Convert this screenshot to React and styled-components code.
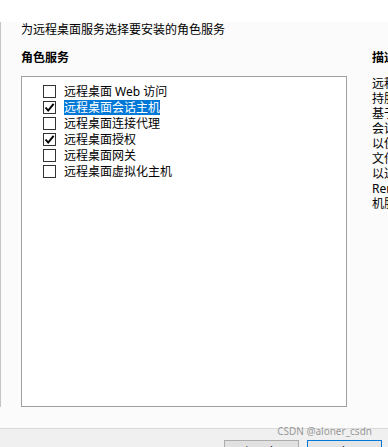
import React from "react";
import styled, { createGlobalStyle } from "styled-components";

const Global = createGlobalStyle`
  html, body { margin: 0; padding: 0; background: #fbfbfb; overflow: hidden; }
  body { font-family: "Segoe UI", "Noto Sans", "Noto Sans CJK SC", sans-serif; font-size: 12px; color: #000; }
`;

const Page = styled.div`
  position: relative;
  width: 388px;
  height: 447px;
  overflow: hidden;
  display: flex;
  flex-direction: column;
  background: #fbfbfb;
`;

const TopStrip = styled.div`
  height: 22px;
  background: #ffffff;
  flex: none;
`;

const Main = styled.div`
  flex: none;
  height: 385px;
  border-left: 1px solid #c4c4c4;
  padding-left: 20px;
  box-sizing: border-box;
  display: flex;
  flex-direction: column;
`;

const Title = styled.div`
  line-height: 16px;
  height: 16px;
  white-space: nowrap;
`;

const Columns = styled.div`
  margin-top: 12px;
  display: flex;
  gap: 25px;
  flex: 1;
  min-height: 0;
`;

const LeftCol = styled.div`
  width: 326px;
  flex: none;
  display: flex;
  flex-direction: column;
`;

const RightCol = styled.div`
  flex: none;
  width: 200px;
  display: flex;
  flex-direction: column;
`;

const Heading = styled.div`
  font-weight: bold;
  line-height: 16px;
  height: 16px;
  white-space: nowrap;
`;

const ListBox = styled.div`
  margin-top: 10px;
  flex: 1;
  background: #ffffff;
  border: 1px solid #a0a0a0;
  padding: 6px 0 0 21px;
  display: flex;
  flex-direction: column;
`;

const Row = styled.div`
  height: 16px;
  display: flex;
  align-items: center;
  gap: 8px;
`;

const Box = styled.span`
  width: 11px;
  height: 11px;
  border: 1px solid #333333;
  background: #ffffff;
  flex: none;
  display: flex;
  align-items: center;
  justify-content: center;
`;

const Label = styled.span`
  line-height: 15px;
  height: 15px;
  white-space: nowrap;
  background: ${(p) => (p.$selected ? "#0078d7" : "transparent")};
  color: ${(p) => (p.$selected ? "#ffffff" : "#000000")};
`;

const Desc = styled.div`
  margin-top: 10px;
  display: flex;
  flex-direction: column;
`;

const DescLine = styled.div`
  line-height: 15px;
  height: 15px;
  white-space: nowrap;
`;

const Spacer = styled.div`
  height: 21px;
  flex: none;
`;

const Footer = styled.div`
  flex: 1;
  border-top: 1px solid #dadada;
  background: #f0f0f0;
  display: flex;
  justify-content: flex-end;
  align-items: flex-start;
  gap: 8px;
  padding: 11px 6px 0 0;
`;

const Button = styled.button`
  width: 75px;
  height: 23px;
  box-sizing: border-box;
  font-family: inherit;
  font-size: 12px;
  padding: 3px 0 0;
  line-height: 16px;
  color: #000;
  background: ${(p) => (p.$primary ? "#e5e5e5" : "#e1e1e1")};
  border: 1px solid ${(p) => (p.$primary ? "#0078d7" : "#adadad")};
  flex: none;
`;

const Watermark = styled.div`
  position: absolute;
  right: 16px;
  top: 425px;
  font-family: "Noto Sans", "Liberation Sans", sans-serif;
  font-size: 10px;
  line-height: 13px;
  color: rgba(120, 120, 120, 0.75);
  white-space: nowrap;
`;

const Check = () => (
  <svg width="11" height="11" viewBox="0 0 11 11">
    <path d="M1.5 5.5 L4.2 8.6 L9.6 1.8" fill="none" stroke="#000" strokeWidth="1.9" />
  </svg>
);

const items = [
  { label: "远程桌面 Web 访问", checked: false },
  { label: "远程桌面会话主机", checked: true, selected: true },
  { label: "远程桌面连接代理", checked: false },
  { label: "远程桌面授权", checked: true },
  { label: "远程桌面网关", checked: false },
  { label: "远程桌面虚拟化主机", checked: false },
];

const descLines = [
  "远程桌面会话主机(RD 会话主机)",
  "持服务器托管基于 Windows 的程序",
  "基于 Windows 的桌面。用户可以连接",
  "会话主机服务器来运行程序、保存",
  "以使用该服务器上的网络资源。",
  "文件以及使用网络资源。用户可",
  "以通过使用远程桌面连接客户端或",
  "RemoteApp 程序来访问 RD 会话主",
  "机服务器。",
];

export default function App() {
  return (
    <>
      <Global />
      <Page>
        <TopStrip />
        <Main>
          <Title>为远程桌面服务选择要安装的角色服务</Title>
          <Columns>
            <LeftCol>
              <Heading>角色服务</Heading>
              <ListBox>
                {items.map((it) => (
                  <Row key={it.label}>
                    <Box>{it.checked && <Check />}</Box>
                    <Label $selected={it.selected}>{it.label}</Label>
                  </Row>
                ))}
              </ListBox>
            </LeftCol>
            <RightCol>
              <Heading>描述</Heading>
              <Desc>
                {descLines.map((l, i) => (
                  <DescLine key={i}>{l}</DescLine>
                ))}
              </Desc>
            </RightCol>
          </Columns>
        </Main>
        <Spacer />
        <Footer>
          <Button>&lt; 上一步(P)</Button>
          <Button $primary>下一步(N) &gt;</Button>
        </Footer>
        <Watermark>CSDN @aloner_csdn</Watermark>
      </Page>
    </>
  );
}
